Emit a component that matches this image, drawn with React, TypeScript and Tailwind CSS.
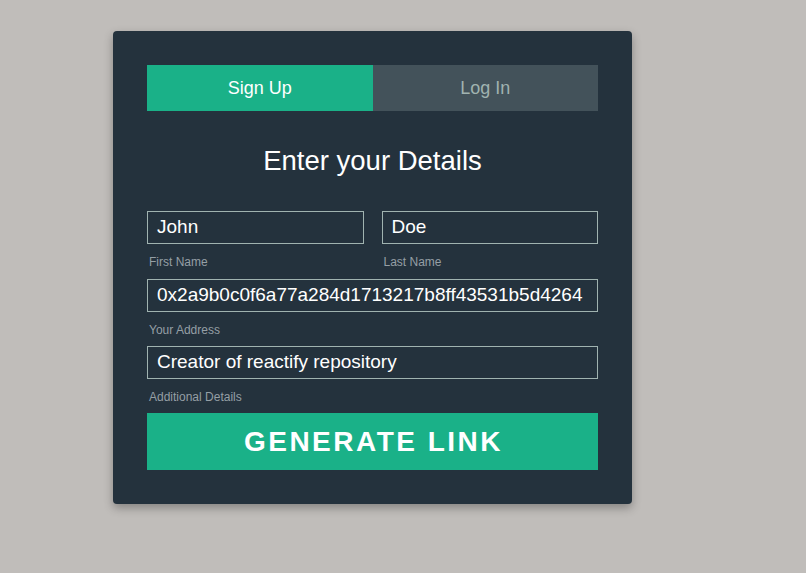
import React from "react";

export default function App() {
  const font = { fontFamily: '"Liberation Sans", Arial, sans-serif' };
  return (
    <div className="min-h-[573px] w-full bg-[#c0bdba] pl-[113px] pt-[31px]" style={font}>
      <div className="w-[519px] rounded-[4px] bg-[#24323d] px-[34px] pt-[34px] pb-[34px] shadow-[0_4px_10px_rgba(0,0,0,0.3)]">
        <div className="flex h-[46px]">
          <div className="flex flex-1 items-center justify-center bg-[#1ab188] text-[18px] text-white">Sign Up</div>
          <div className="flex flex-1 items-center justify-center bg-[#43525a] text-[18px] text-[#a0b3b0]">Log In</div>
        </div>
        <h1 className="mt-[35px] mb-[35px] text-center text-[27.5px] leading-[30px] text-white">Enter your Details</h1>
        <div className="flex gap-[18px]">
          <div className="flex-1">
            <div className="flex h-[33px] items-center border border-[#a0b3b0] pl-[9px] text-[19px] text-white">John</div>
            <div className="mt-[11px] mb-[10px] pl-[2px] text-[12px] leading-[14px] text-[#959fa5]">First Name</div>
          </div>
          <div className="flex-1">
            <div className="flex h-[33px] items-center border border-[#a0b3b0] pl-[9px] text-[19px] text-white">Doe</div>
            <div className="mt-[11px] mb-[10px] pl-[2px] text-[12px] leading-[14px] text-[#959fa5]">Last Name</div>
          </div>
        </div>
        <div className="flex h-[33px] items-center border border-[#a0b3b0] pl-[9px] text-[19px] text-white">0x2a9b0c0f6a77a284d1713217b8ff43531b5d4264</div>
        <div className="mt-[11px] mb-[9px] pl-[2px] text-[12px] leading-[14px] text-[#959fa5]">Your Address</div>
        <div className="flex h-[33px] items-center border border-[#a0b3b0] pl-[9px] text-[19px] text-white">Creator of reactify repository</div>
        <div className="mt-[11px] mb-[9px] pl-[2px] text-[12px] leading-[14px] text-[#959fa5]">Additional Details</div>
        <div className="flex h-[57px] items-center justify-center bg-[#1ab188] pl-[2px] text-[28px] font-bold tracking-[2.5px] text-white">GENERATE LINK</div>
      </div>
    </div>
  );
}
